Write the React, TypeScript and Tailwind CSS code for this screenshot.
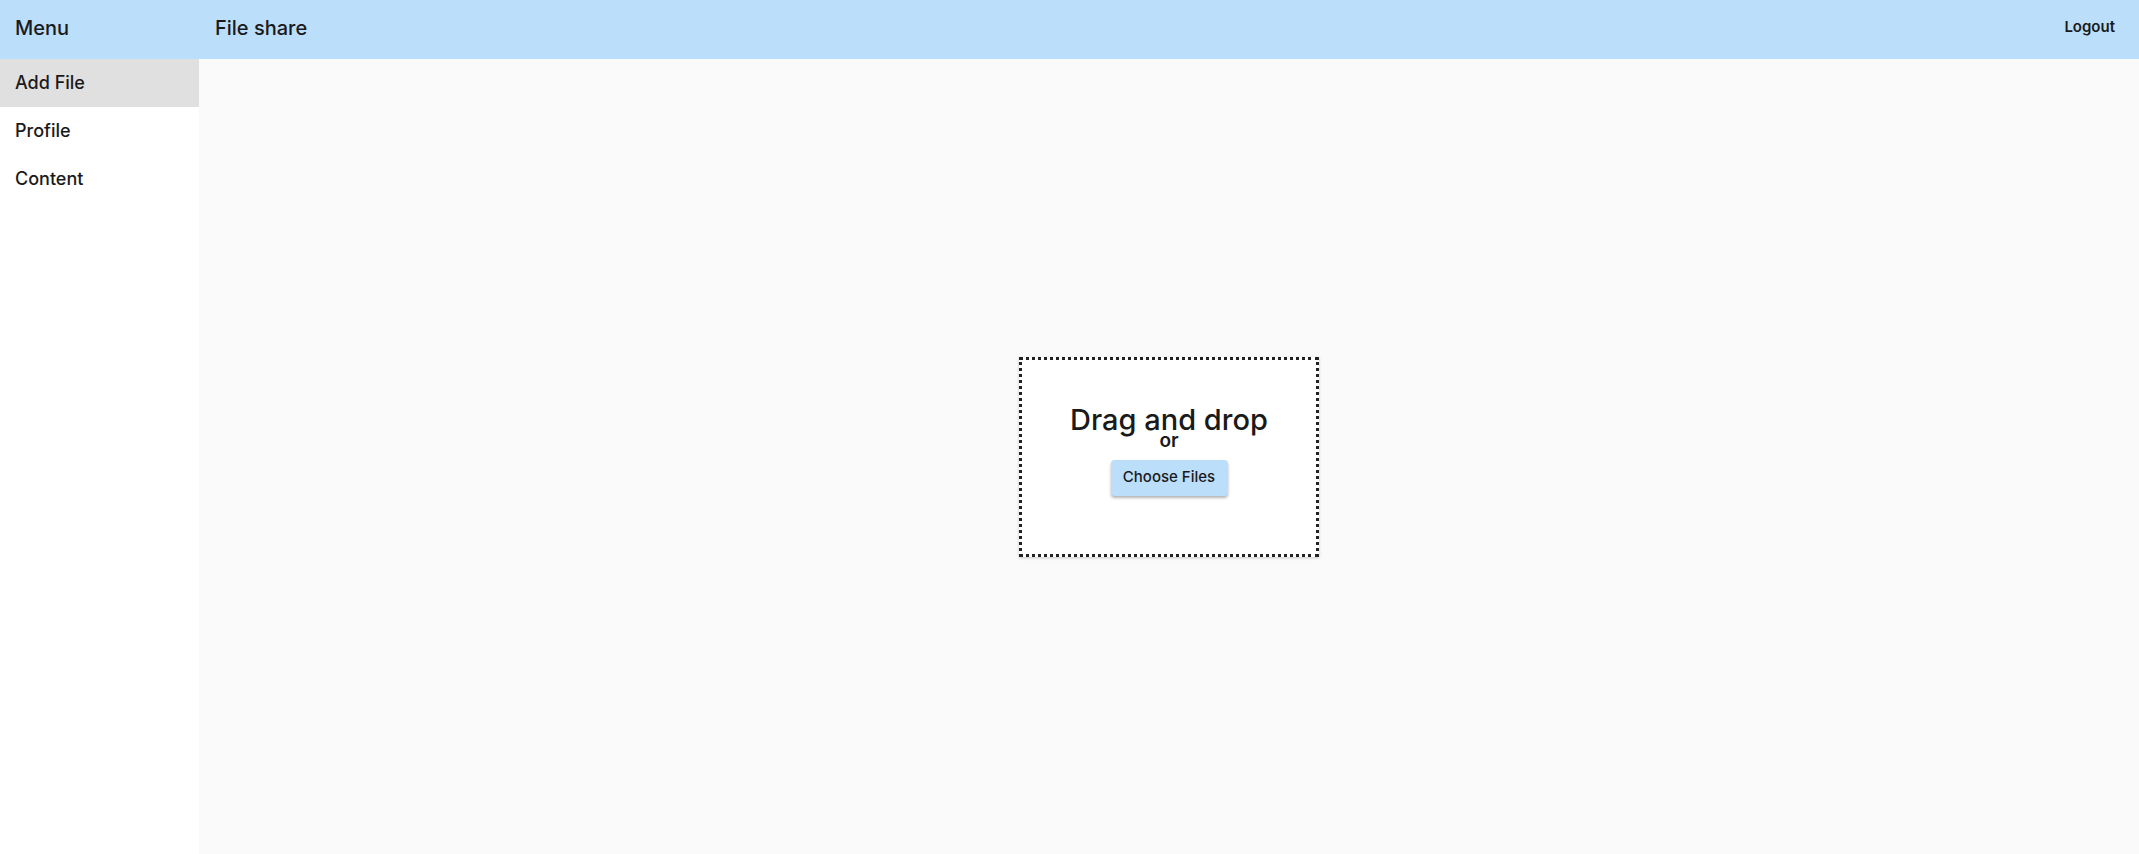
import React from "react";

const navItems = ["Add File", "Profile", "Content"];

export default function App() {
  return (
    <div
      className="flex h-[854px] w-full flex-col text-[#1a1a1a]"
      style={{ fontFamily: "Inter, 'Noto Sans', sans-serif" }}
    >
      <header className="flex h-[59px] shrink-0 items-center bg-[#bbdefb] pb-[4px]">
        <div className="w-[199px] pl-[15px] text-[20px] font-medium">Menu</div>
        <div className="flex-1 pl-[16px] text-[20px] font-medium">File share</div>
        <button className="pr-[24px] text-[15px] font-semibold">Logout</button>
      </header>
      <div className="flex flex-1">
        <aside className="w-[199px] shrink-0 bg-white">
          {navItems.map((item, i) => (
            <div
              key={item}
              className={
                "flex h-[48px] items-center pb-[2px] pl-[15px] text-[18px] font-medium " +
                (i === 0 ? "bg-[#e0e0e0]" : "")
              }
            >
              {item}
            </div>
          ))}
        </aside>
        <main className="flex flex-1 items-center justify-center bg-[#fafafa]">
          <FileDrop />
        </main>
      </div>
    </div>
  );
}

function FileDrop() {
  return (
    <div className="flex h-[200px] w-[300px] flex-col items-center border-[3px] border-dotted border-[#222] bg-white pt-[47px] shadow-[0_1px_3px_rgba(0,0,0,0.2)]">
      <div className="text-[29px] font-medium leading-[26px]">Drag and drop</div>
      <div className="text-[19px] font-semibold leading-[16px]">or</div>
      <button className="mt-[11px] flex h-[36px] w-[117px] items-center justify-center rounded-[4px] bg-[#bbdefb] text-[15px] font-medium shadow-[0_2px_3px_rgba(0,0,0,0.3)]">
        Choose Files
      </button>
    </div>
  );
}
